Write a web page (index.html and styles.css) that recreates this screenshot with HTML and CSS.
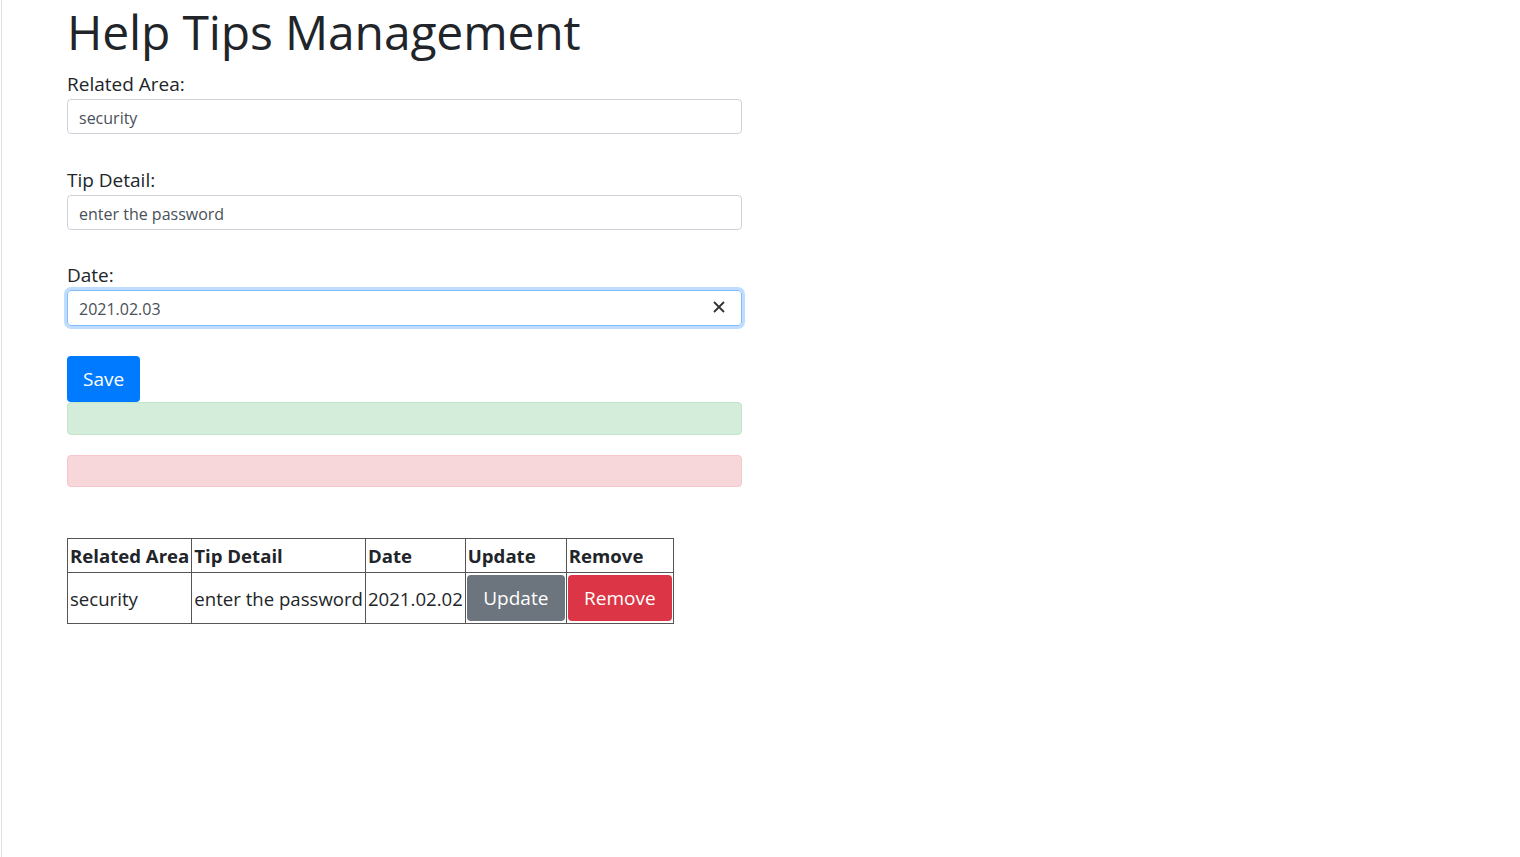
FILE: index.html
```html
<!DOCTYPE html>
<html>
<head>
<meta charset="utf-8">
<link rel="stylesheet" href="styles.css">
</head>
<body>
<div class="page">
  <h1 class="title">Help Tips Management</h1>
  <form class="form">
    <div class="field">
      <label class="label">Related Area:</label>
      <div class="input">security</div>
    </div>
    <div class="field">
      <label class="label">Tip Detail:</label>
      <div class="input">enter the password</div>
    </div>
    <div class="field">
      <label class="label">Date:</label>
      <div class="input input-focus"><span>2021.02.03</span>
        <svg class="clear" width="12" height="12" viewBox="0 0 12 12"><path d="M1 1L11 11M11 1L1 11" stroke="#333" stroke-width="1.8" fill="none"/></svg>
      </div>
    </div>
    <div class="actions"><button type="button" class="btn btn-primary">Save</button></div>
    <div class="alert alert-success"></div>
    <div class="alert alert-danger"></div>
  </form>
  <table class="tips">
    <thead>
      <tr><th>Related Area</th><th>Tip Detail</th><th>Date</th><th>Update</th><th>Remove</th></tr>
    </thead>
    <tbody>
      <tr>
        <td>security</td><td>enter the password</td><td>2021.02.02</td>
        <td class="btn-cell"><button type="button" class="btn btn-secondary">Update</button></td>
        <td class="btn-cell"><button type="button" class="btn btn-danger">Remove</button></td>
      </tr>
    </tbody>
  </table>
</div>
</body>
</html>
```
FILE: styles.css
```css
html, body { margin: 0; padding: 0; background: #fff; }
body { font-family: "Open Sans", "Noto Sans", sans-serif; color: #212529; }
.page {
  margin-left: 1px;
  border-left: 1px solid #dee2e6;
  min-height: 857px;
  padding-left: 65px;
  box-sizing: border-box;
}
.title {
  margin: 0 0 8px;
  font-weight: 400;
  font-size: 48px;
  line-height: 64px;
  height: 64px;
  letter-spacing: -0.15px;
}
.form { width: 675px; }
.field { margin-bottom: 33px; }
.field:first-child { margin-bottom: 34px; }
.field:nth-child(3) { margin-bottom: 30px; }
.label { display: block; font-size: 19px; line-height: 24px; margin-bottom: 3px; }
.input {
  height: 35px;
  box-sizing: border-box;
  border: 1px solid #ced4da;
  border-radius: 4px;
  padding: 2px 11px 0;
  font-size: 16px;
  display: flex;
  align-items: center;
  color: #495057;
}
.input-focus {
  height: 36px;
  border-color: #80bdff;
  box-shadow: 0 0 0 3px rgba(0,123,255,.25);
  justify-content: space-between;
  padding-right: 16px;
}
.clear { display: block; margin-top: -4px; }
.btn {
  border: 1px solid transparent;
  border-radius: 4px;
  font-family: inherit;
  font-size: 19px;
  color: #fff;
  height: 46px;
  padding: 0 15px;
  cursor: pointer;
}
.btn-primary { background: #007bff; width: 73px; }
.btn-secondary { background: #6c757d; width: 98px; }
.btn-danger { background: #dc3545; width: 104px; }
.actions { display: flex; }
.alert {
  height: 33px;
  box-sizing: border-box;
  border: 1px solid;
  border-radius: 4px;
}
.alert-success { background: #d4edda; border-color: #c3e6cb; margin-bottom: 20px; }
.alert-danger { background: #f8d7da; border-color: #f5c6cb; height: 32px; }
.tips {
  margin-top: 51px;
  border-collapse: collapse;
  border: 1px solid #555;
  font-size: 18.6px;
}
.tips th, .tips td {
  border: 1px solid #555;
  padding: 0 2px;
  text-align: left;
}
.tips th { height: 33px; font-weight: 700; }
.tips td { height: 50px; }
.tips td.btn-cell { padding: 0 1px; }
.tips td.btn-cell .btn { display: block; }
```
